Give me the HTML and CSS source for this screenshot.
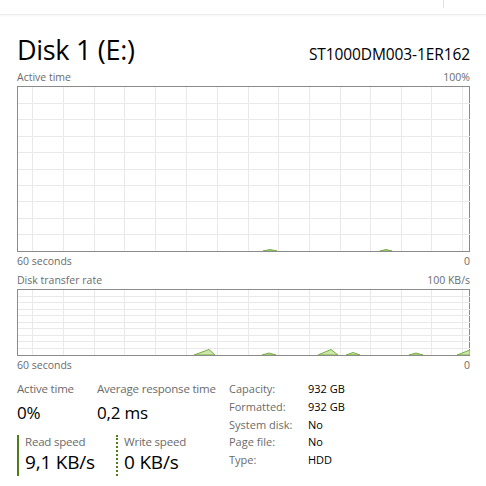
FILE: index.html
```html
<!DOCTYPE html>
<html lang="en">
<head>
    <meta charset="UTF-8">
    <title>Disk 1 (E:)</title>
    <link rel="stylesheet" href="styles.css">
</head>
<body>
    <div class="topbar"><span class="tick"></span></div>

    <main class="panel">
        <header class="head">
            <h1>Disk 1 (E:)</h1>
            <span class="model">ST1000DM003-1ER162</span>
        </header>

        <div class="axis"><span>Active time</span><span>100%</span></div>
        <div class="chart tall">
            <svg width="452" height="164" viewBox="0 0 452 164">
                <g class="grid">
                    <path d="M0 16.5H452M0 32.5H452M0 49.5H452M0 65.5H452M0 82.5H452M0 98.5H452M0 114.5H452M0 131.5H452M0 147.5H452"/>
                    <path d="M14.5 0V164M45.5 0V164M76.5 0V164M106.5 0V164M137.5 0V164M168.5 0V164M199.5 0V164M230.5 0V164M260.5 0V164M291.5 0V164M322.5 0V164M352.5 0V164M383.5 0V164M413.5 0V164M444.5 0V164"/>
                </g>
                <g class="load">
                    <polygon points="245,164 252,162.5 259,164"/>
                    <polygon points="362,164 368,162.5 374,164"/>
                </g>
            </svg>
        </div>
        <div class="axis below"><span>60 seconds</span><span>0</span></div>

        <div class="axis gap"><span>Disk transfer rate</span><span>100 KB/s</span></div>
        <div class="chart short">
            <svg width="452" height="65" viewBox="0 0 452 65">
                <g class="grid">
                    <path d="M0 6.5H452M0 12.5H452M0 19.5H452M0 25.5H452M0 32.5H452M0 38.5H452M0 45.5H452M0 51.5H452M0 58.5H452"/>
                    <path d="M14.5 0V65M45.5 0V65M76.5 0V65M106.5 0V65M137.5 0V65M168.5 0V65M199.5 0V65M230.5 0V65M260.5 0V65M291.5 0V65M322.5 0V65M352.5 0V65M383.5 0V65M413.5 0V65M444.5 0V65"/>
                </g>
                <g class="load">
                    <polygon points="176,65 191,59.5 197,65"/>
                    <polygon points="244,65 251,63 258,65"/>
                    <polygon points="300,65 313,59.5 320,65"/>
                    <polygon points="328,65 335,62.5 342,65"/>
                    <polygon points="391,65 398,63 405,65"/>
                    <polygon points="439,65 452,60 452,65"/>
                </g>
            </svg>
        </div>
        <div class="axis below"><span>60 seconds</span><span>0</span></div>

        <section class="stats">
            <div class="live">
                <div class="row">
                    <div class="stat first">
                        <span class="label">Active time</span>
                        <span class="value">0%</span>
                    </div>
                    <div class="stat">
                        <span class="label">Average response time</span>
                        <span class="value">0,2 ms</span>
                    </div>
                </div>
                <div class="row">
                    <div class="stat speed read">
                        <span class="label">Read speed</span>
                        <span class="value big">9,1 KB/s</span>
                    </div>
                    <div class="stat speed write">
                        <span class="label">Write speed</span>
                        <span class="value big">0 KB/s</span>
                    </div>
                </div>
            </div>

            <dl class="props">
                <dt>Capacity:</dt><dd>932 GB</dd>
                <dt>Formatted:</dt><dd>932 GB</dd>
                <dt>System disk:</dt><dd>No</dd>
                <dt>Page file:</dt><dd>No</dd>
                <dt>Type:</dt><dd>HDD</dd>
            </dl>
        </section>
    </main>
</body>
</html>
```

FILE: styles.css
```css
* {
    margin: 0;
    padding: 0;
    box-sizing: border-box;
}

body {
    font-family: "Open Sans", "Noto Sans", sans-serif;
    background: #fff;
    color: #000;
    width: 486px;
    height: 486px;
    overflow: hidden;
}

/* Toolbar strip on top */
.topbar {
    height: 15px;
    border-bottom: 1px solid #ececec;
    box-shadow: 0 1px 2px rgba(0, 0, 0, 0.04);
    position: relative;
}

.tick {
    position: absolute;
    left: 443px;
    top: 0;
    width: 1px;
    height: 8px;
    background: #e2e2e2;
}

.panel {
    padding: 0 16px 0 17px;
}

/* Title row */
.head {
    display: flex;
    justify-content: space-between;
    align-items: baseline;
    height: 54px;
    padding-top: 17px;
}

h1 {
    font-size: 27px;
    font-weight: 400;
    letter-spacing: -0.3px;
    line-height: 36px;
}

.model {
    font-size: 15.5px;
    letter-spacing: -0.1px;
}

/* Labels above / below the charts */
.axis {
    display: flex;
    justify-content: space-between;
    font-size: 10.5px;
    line-height: 17px;
    color: #6b6b6b;
}

.axis.below {
    padding-top: 1px;
}

.axis.gap {
    margin-top: 2px;
}

.chart {
    border: 1px solid #8b8b8b;
    width: 453px;
    line-height: 0;
}

.grid path {
    stroke: #e9e9e9;
    stroke-width: 1;
    fill: none;
}

.load polygon {
    fill: #cde7a9;
    stroke: #78ad44;
    stroke-width: 1;
}

/* Bottom stats */
.stats {
    display: flex;
    align-items: flex-start;
    margin-top: 7px;
}

.live {
    width: 212px;
}

.row {
    display: flex;
}

.stat {
    display: flex;
    flex-direction: column;
    width: 80px;
}

.stat + .stat {
    width: 130px;
}

.label {
    font-size: 11.5px;
    line-height: 16px;
    color: #6b6b6b;
    letter-spacing: -0.2px;
    white-space: nowrap;
}

.value {
    font-size: 17px;
    line-height: 32px;
    letter-spacing: -0.2px;
}

.value.big {
    font-size: 19px;
    line-height: 28px;
}

.speed {
    margin-top: 6px;
    padding-left: 6px;
    border-left: 2px solid #4f7e18;
    width: 99px;
}

.speed.write {
    border-left: 2px dotted #4f7e18;
    width: 110px;
}

.speed .label {
    line-height: 12px;
    margin-top: 1px;
}

/* Disk properties */
.props {
    display: grid;
    grid-template-columns: 79px auto;
    grid-auto-rows: 17.75px;
    align-content: start;
    font-size: 11px;
    line-height: 17.75px;
    margin-top: -1px;
}

.props dt {
    color: #6b6b6b;
}

.props dd {
    color: #000;
}
```
